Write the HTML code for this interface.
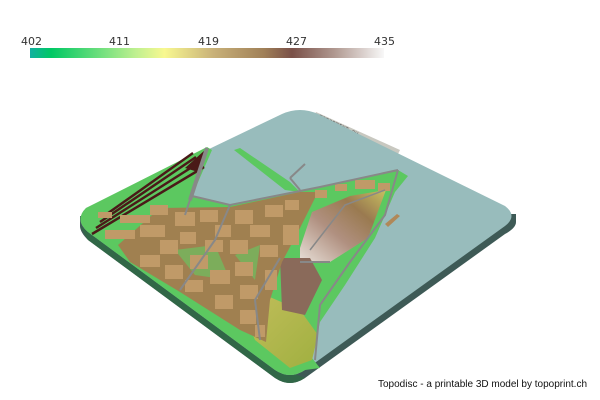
<!DOCTYPE html>
<html><head><style>
body{margin:0;width:600px;height:400px;background:#fff;overflow:hidden;font-family:"DejaVu Sans","Liberation Sans",sans-serif;}
.lbl{position:absolute;top:35px;font-size:11px;color:#333;}
</style></head><body>
<div class="lbl" style="left:21px">402</div>
<div class="lbl" style="left:109px">411</div>
<div class="lbl" style="left:198px">419</div>
<div class="lbl" style="left:286px">427</div>
<div class="lbl" style="left:374px">435</div>
<div style="position:absolute;left:30px;top:48px;width:354px;height:10px;background:linear-gradient(90deg,#12b0a0 0%,#00c864 6%,#c0f090 30%,#f8f890 38%,#c8b078 52%,#a08058 66%,#7a5048 74%,#b09890 86%,#f8f8f8 100%)"></div>
<svg width="600" height="400" style="position:absolute;left:0;top:0">
<defs>
<linearGradient id="hill" x1="0" y1="1" x2="1" y2="0"><stop offset="0" stop-color="#e8e0d8"/><stop offset="0.4" stop-color="#b09080"/><stop offset="0.7" stop-color="#9a7a50"/><stop offset="1" stop-color="#c8c060"/></linearGradient>
<linearGradient id="bot" x1="0" y1="0" x2="1" y2="1"><stop offset="0" stop-color="#c8c060"/><stop offset="1" stop-color="#a0b040"/></linearGradient>
</defs>
<polygon points="316,112 400,150 397,156 313,118" fill="#c8c8c0"/>
<text x="318" y="118" font-size="6" fill="#555" transform="rotate(25 318 118)" font-family="Liberation Mono,monospace">TOPOPRINT.CH</text>
<path d="M80,216 L80,226 Q80,232 88,240 L275,378 Q290,388 305,378 L505,234 Q516,228 516,222 L516,214 Z" fill="#3e5a56"/>
<path d="M80,226 L88,240 L275,378 Q290,388 305,378 L290,372 Z" fill="#2e6a44" opacity=".8"/>
<path d="M86,208 L282,114 Q300,106 318,114 L505,206 Q518,216 505,226 L305,370 Q290,380 275,370 L88,232 Q74,220 86,208 Z" fill="#98bcbc"/>
<path d="M86,208 L207,147 L212,150 L192,196 L230,205 L280,195 L320,187 L398,170 L408,176 L395,192 L375,238 L345,285 L320,322 L312,358 L320,368 L305,370 Q290,380 275,370 L88,232 Q74,220 86,208 Z" fill="#5cc860"/>
<path d="M234,150 L240,148 L290,182 L300,192 L285,190 Z" fill="#5cc860"/>
<path d="M185,168 L205,150 L198,172 Z" fill="#4a1a18"/>
<path d="M96,228 L200,162 M92,234 L204,167 M100,222 L196,157 M104,216 L193,153" stroke="#4a1a18" stroke-width="2.5"/>
<path d="M230,280 L300,310 L318,335 L312,360 L290,368 L255,340 Z" fill="url(#bot)"/>
<path d="M300,248 L312,212 L350,196 L386,190 L368,238 L330,262 L300,262 Z" fill="url(#hill)"/>
<path d="M280,258 L310,258 L322,280 L305,315 L282,310 Z" fill="#8a6a5a"/>
<path d="M118,245 L160,208 L230,207 L300,192 L318,192 L298,232 L282,262 L270,300 L266,342 L240,330 L180,292 L130,262 Z" fill="#a08050"/>
<path d="M175,250 L215,245 L230,280 L195,275 Z M235,255 L260,245 L255,280 Z" fill="#6cc060" opacity=".7"/>
<g fill="#c09a68">
<rect x="105" y="230" width="30" height="9"/><rect x="120" y="215" width="30" height="8"/><rect x="140" y="225" width="25" height="12"/>
<rect x="150" y="205" width="18" height="10"/><rect x="175" y="212" width="20" height="14"/><rect x="160" y="240" width="18" height="14"/>
<rect x="180" y="232" width="16" height="12"/><rect x="200" y="210" width="18" height="12"/><rect x="215" y="225" width="16" height="12"/>
<rect x="235" y="210" width="18" height="14"/><rect x="250" y="225" width="20" height="12"/><rect x="265" y="205" width="18" height="12"/>
<rect x="285" y="200" width="14" height="10"/><rect x="140" y="255" width="20" height="12"/><rect x="165" y="265" width="18" height="14"/>
<rect x="190" y="255" width="18" height="14"/><rect x="205" y="240" width="18" height="12"/><rect x="230" y="240" width="18" height="14"/>
<rect x="260" y="245" width="18" height="12"/><rect x="185" y="280" width="18" height="12"/><rect x="210" y="270" width="20" height="14"/>
<rect x="235" y="262" width="18" height="14"/><rect x="215" y="295" width="18" height="14"/><rect x="240" y="285" width="18" height="14"/>
<rect x="240" y="310" width="16" height="14"/><rect x="255" y="325" width="10" height="12"/><rect x="265" y="270" width="12" height="20"/>
<rect x="283" y="225" width="16" height="20"/><rect x="315" y="190" width="12" height="8"/><rect x="335" y="184" width="12" height="7"/>
<rect x="355" y="180" width="20" height="9"/><rect x="378" y="183" width="12" height="8"/><rect x="98" y="212" width="14" height="6"/>
</g>
<polygon points="385,224 397,214 400,216 388,227" fill="#b08858"/>
<path d="M207,148 L185,215 M192,196 L230,205 L280,195 L320,187 L398,170 M398,170 L385,215 L350,262 L320,305 L315,360 M300,190 L290,178 M290,178 L305,164 M230,205 L215,240 L180,290 M280,258 L255,300 L260,340 M300,262 L330,262" stroke="#888" stroke-width="2" fill="none"/>
<path d="M207,148 L190,200" stroke="#888" stroke-width="4" fill="none"/>
<path d="M310,250 L345,205 L385,190" stroke="#888" stroke-width="1.5" fill="none"/>
</svg>
<div style="position:absolute;left:378px;top:379px;font-size:10px;color:#111;font-family:'Liberation Sans',sans-serif">Topodisc - a printable 3D model by topoprint.ch</div>
</body></html>
